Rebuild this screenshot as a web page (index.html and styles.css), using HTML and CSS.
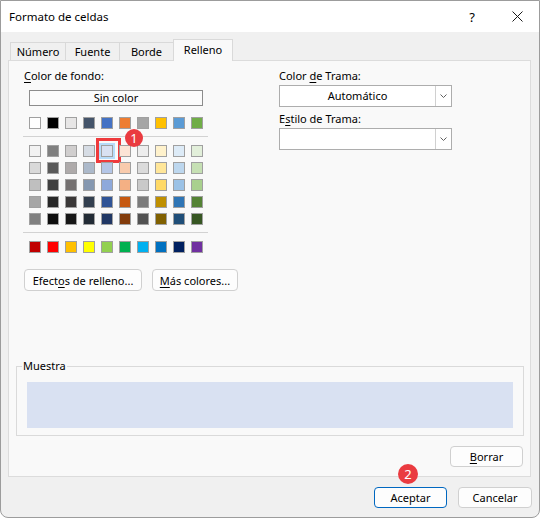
FILE: index.html
```html
<!DOCTYPE html>
<html lang="es">
<head>
    <meta charset="UTF-8">
    <title>Formato de celdas</title>
    <link rel="stylesheet" href="styles.css">
</head>
<body>

<div class="window">
    <div class="titlebar">
        <span class="title">Formato de celdas</span>
        <span class="help">?</span>
        <span class="close">
            <svg width="11" height="11" viewBox="0 0 11 11"><path d="M0.5 0.5 L10.5 10.5 M10.5 0.5 L0.5 10.5" stroke="#1a1a1a" stroke-width="1" fill="none"/></svg>
        </span>
    </div>

    <div class="content">
        <div class="tabs">
            <div class="tab">Número</div>
            <div class="tab">Fuente</div>
            <div class="tab">Borde</div>
            <div class="tab active">Relleno</div>
        </div>

        <div class="panel">
            <div class="top">
                <div class="fill-col">
                    <div class="label"><u>C</u>olor de fondo:</div>
                    <button class="no-color">Sin color</button>
                    <div class="swatches base" id="base"></div>
                    <hr class="sep">
                    <div class="swatches" id="tints"></div>
                    <hr class="sep">
                    <div class="swatches" id="standard"></div>
                </div>
                <div class="pattern-col">
                    <div class="label">Color <u>d</u>e Trama:</div>
                    <div class="select">
                        <span class="value">Automático</span>
                        <span class="arrow"><svg width="7" height="4" viewBox="0 0 7 4"><path d="M0.5 0.5 L3.5 3.5 L6.5 0.5" stroke="#606060" fill="none"/></svg></span>
                    </div>
                    <div class="label second">E<u>s</u>tilo de Trama:</div>
                    <div class="select">
                        <span class="value"></span>
                        <span class="arrow"><svg width="7" height="4" viewBox="0 0 7 4"><path d="M0.5 0.5 L3.5 3.5 L6.5 0.5" stroke="#606060" fill="none"/></svg></span>
                    </div>
                </div>
            </div>

            <div class="actions">
                <button class="btn effects">Efect<u>o</u>s de relleno...</button>
                <button class="btn more"><u>M</u>ás colores...</button>
            </div>

            <fieldset class="sample">
                <legend>Muestra</legend>
                <div class="sample-fill"></div>
            </fieldset>

            <div class="clear-row">
                <button class="btn"><u>B</u>orrar</button>
            </div>
        </div>

        <div class="footer">
            <button class="btn primary">Aceptar</button>
            <button class="btn cancel">Cancelar</button>
        </div>
    </div>

    <span class="badge badge-1">1</span>
    <span class="badge badge-2">2</span>
</div>

<script>
    const base = ['#ffffff', '#000000', '#e7e6e6', '#44546a', '#4472c4', '#ed7d31', '#a5a5a5', '#ffc000', '#5b9bd5', '#70ad47'];
    const tints = [
        '#f2f2f2', '#7f7f7f', '#d0cece', '#d6dce4', '#d9e1f2', '#fce4d6', '#ededed', '#fff2cc', '#ddebf7', '#e2efda',
        '#d9d9d9', '#595959', '#aeaaaa', '#acb9ca', '#b4c6e7', '#f8cbad', '#dbdbdb', '#ffe699', '#bdd7ee', '#c6e0b4',
        '#bfbfbf', '#404040', '#757171', '#8497b0', '#8ea9db', '#f4b084', '#c9c9c9', '#ffd966', '#9bc2e6', '#a9d08e',
        '#a6a6a6', '#262626', '#3a3838', '#333f4f', '#305496', '#c65911', '#7b7b7b', '#bf8f00', '#2f75b5', '#548235',
        '#808080', '#0d0d0d', '#161616', '#222b35', '#203764', '#833c0c', '#525252', '#806000', '#1f4e78', '#375623'
    ];
    const standard = ['#c00000', '#ff0000', '#ffc000', '#ffff00', '#92d050', '#00b050', '#00b0f0', '#0070c0', '#002060', '#7030a0'];

    function fillSwatches(id, colors, picked) {
        document.getElementById(id).innerHTML = colors.map((color, index) =>
            `<span class="swatch${index === picked ? ' picked' : ''}" style="background:${color}"></span>`
        ).join('');
    }

    fillSwatches('base', base, -1);
    fillSwatches('tints', tints, 4);
    fillSwatches('standard', standard, -1);
</script>

</body>
</html>
```

FILE: styles.css
```css
body {
    margin: 0;
    background: #fff;
    font-family: 'Noto Sans', sans-serif;
    font-size: 11px;
    color: #000;
}
u {
    text-decoration-thickness: 1px;
    text-underline-offset: 2px;
}
.window {
    position: relative;
    width: 540px;
    height: 518px;
    box-sizing: border-box;
    border: 1px solid #9c9c9c;
    border-radius: 0 0 8px 8px;
    background: #f0f0f0;
    overflow: hidden;
}
.titlebar {
    display: flex;
    align-items: center;
    height: 31px;
    padding-left: 8px;
    background: #fff;
}
.title {
    flex: 1;
    font-size: 11.5px;
}
.help {
    width: 46px;
    text-align: center;
    font-size: 13px;
}
.close {
    display: flex;
    justify-content: center;
    width: 44px;
}
.content {
    padding: 7px 8px 0 7px;
}
.tabs {
    display: flex;
    align-items: flex-end;
    margin-left: 2px;
}
.tab {
    position: relative;
    height: 18px;
    box-sizing: border-box;
    border: 1px solid #d9d9d9;
    border-bottom: none;
    margin-left: -1px;
    text-align: center;
    line-height: 18px;
}
.tab:nth-child(1) { width: 56px; margin-left: 0; }
.tab:nth-child(2) { width: 55px; }
.tab:nth-child(3) { width: 55px; }
.tab.active {
    width: 60px;
    height: 22px;
    margin-bottom: -1px;
    background: #f9f9f9;
    line-height: 20px;
    z-index: 1;
}
.panel {
    border: 1px solid #dcdcdc;
    background: #f9f9f9;
    padding: 7px 0 9px 0;
}
.top {
    display: flex;
}
.label {
    height: 16px;
    line-height: 16px;
}
.fill-col {
    width: 185px;
    margin-left: 14px;
}
.fill-col .label {
    padding-left: 1px;
}
.no-color {
    display: block;
    width: 174px;
    height: 16px;
    margin: 6px 0 0 6px;
    padding: 0;
    border: 1px solid #8c8c8c;
    background: #fbfbfb;
    font: inherit;
    line-height: 14px;
}
.swatches {
    display: grid;
    grid-template-columns: repeat(10, 12px);
    column-gap: 6px;
    row-gap: 5px;
    margin-left: 6px;
}
.swatches.base {
    margin-top: 11px;
}
.swatch {
    position: relative;
    width: 12px;
    height: 12px;
    box-sizing: border-box;
    border: 1px solid #a0a0a0;
}
.swatch.picked {
    box-shadow: 0 0 0 2px #b7dcfa;
}
.swatch.picked::after {
    content: '';
    position: absolute;
    left: -6px;
    top: -8px;
    width: 25px;
    height: 25px;
    box-sizing: border-box;
    border: 3px solid #ef3a3c;
}
.sep {
    height: 1px;
    margin: 7px 0 8px 0;
    border: none;
    background: #d2d2d2;
}
.pattern-col {
    width: 173px;
    margin-left: 71px;
}
.select {
    display: flex;
    height: 22px;
    box-sizing: border-box;
    margin-top: 1px;
    border: 1px solid #adadad;
    background: #fff;
}
.select .value {
    flex: 1;
    text-align: center;
    line-height: 20px;
}
.select .arrow {
    display: flex;
    align-items: center;
    justify-content: center;
    width: 15px;
    border-left: 1px solid #d0d0d0;
}
.label.second {
    margin-top: 4px;
}
.btn {
    height: 22px;
    box-sizing: border-box;
    padding: 0;
    border: 1px solid #d0d0d0;
    border-radius: 4px;
    background: #fdfdfd;
    font: inherit;
    color: #000;
}
.actions {
    display: flex;
    gap: 10px;
    margin: 16px 0 0 15px;
}
.effects { width: 118px; }
.more { width: 86px; }
.sample {
    margin: 67px 6px 0 7px;
    padding: 8px 10px 7px 10px;
    border: 1px solid #dadada;
}
.sample legend {
    margin-left: -5px;
    padding: 0 1px;
    line-height: 16px;
}
.sample-fill {
    height: 46px;
    background: #d9e1f2;
}
.clear-row {
    display: flex;
    justify-content: flex-end;
    margin: 10px 7px 0 0;
}
.clear-row .btn {
    width: 73px;
    height: 21px;
}
.footer {
    display: flex;
    justify-content: flex-end;
    gap: 11px;
    margin: 10px -1px 0 0;
}
.footer .btn {
    width: 73px;
    height: 21px;
}
.footer .cancel { width: 74px; }
.footer .primary {
    border-color: #0067c0;
}
.badge {
    position: absolute;
    width: 18px;
    height: 18px;
    border-radius: 50%;
    background: #ea3b40;
    color: #fff;
    font-size: 13px;
    line-height: 18px;
    text-align: center;
}
.badge-1 {
    left: 124px;
    top: 128px;
}
.badge-2 {
    left: 397px;
    top: 463px;
    width: 20px;
    height: 20px;
    line-height: 20px;
}
```
